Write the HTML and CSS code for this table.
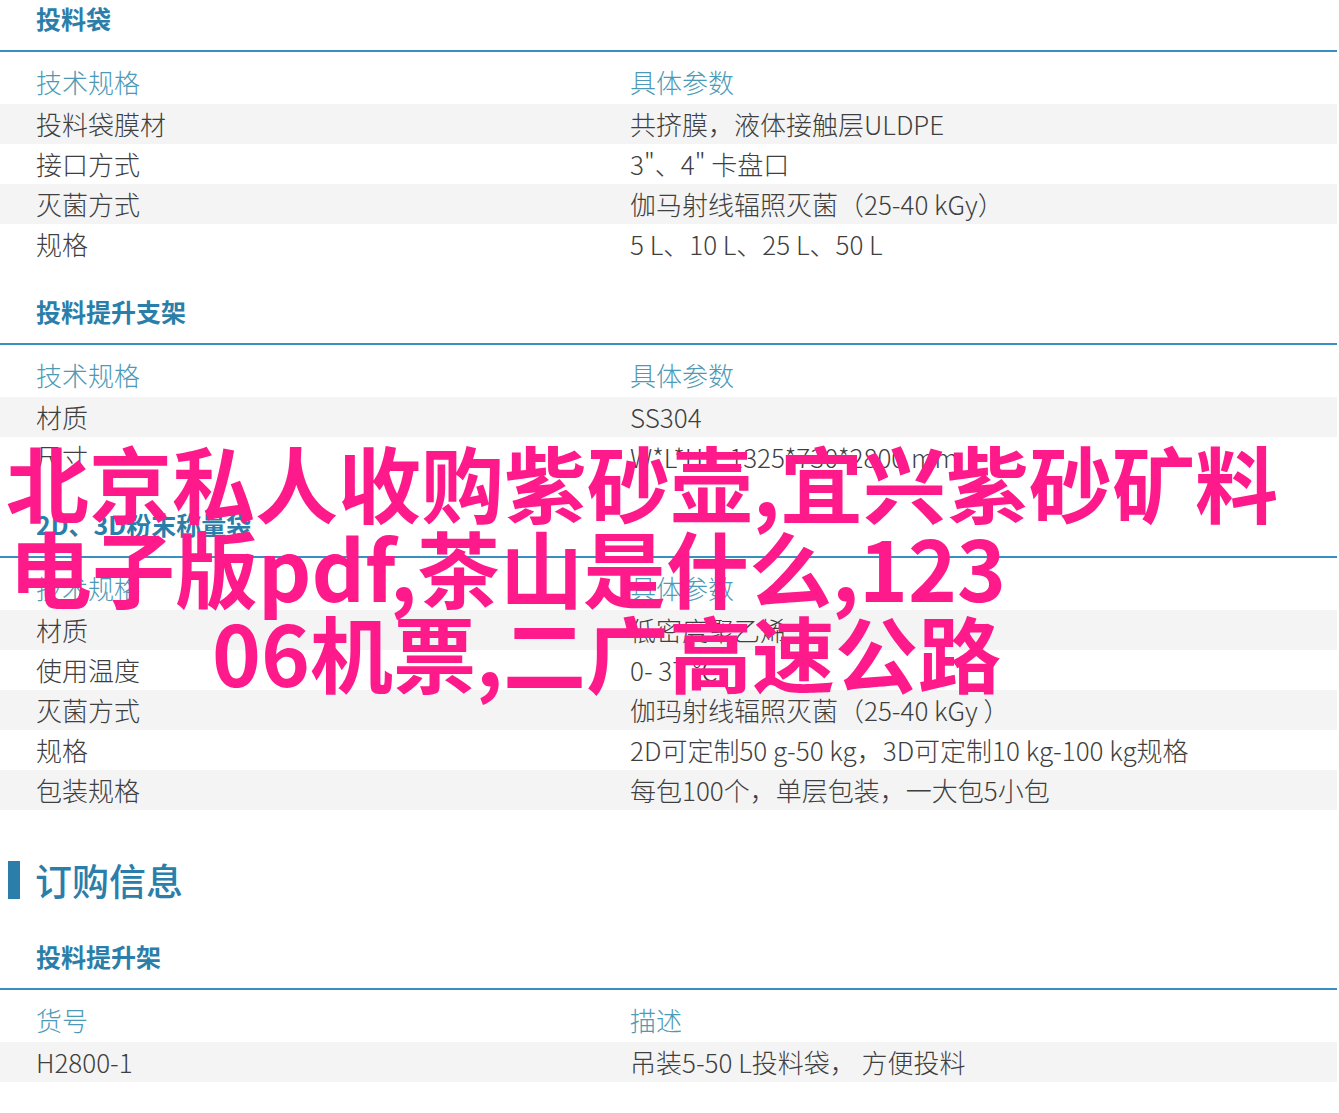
FILE: index.html
```html
<!DOCTYPE html>
<html lang="zh-CN">
<head>
<meta charset="utf-8">
<title>投料袋</title>
<link rel="stylesheet" href="styles.css">
</head>
<body>
<div class="page">
  <section class="spec">
    <h3 class="spec-title">投料袋</h3>
    <div class="row head"><div class="c1">技术规格</div><div class="c2">具体参数</div></div>
    <div class="row odd"><div class="c1">投料袋膜材</div><div class="c2">共挤膜，液体接触层ULDPE</div></div>
    <div class="row"><div class="c1">接口方式</div><div class="c2">3"、4" 卡盘口</div></div>
    <div class="row odd"><div class="c1">灭菌方式</div><div class="c2">伽马射线辐照灭菌（25-40 kGy）</div></div>
    <div class="row"><div class="c1">规格</div><div class="c2">5 L、10 L、25 L、50 L</div></div>
  </section>

  <section class="spec">
    <h3 class="spec-title">投料提升支架</h3>
    <div class="row head"><div class="c1">技术规格</div><div class="c2">具体参数</div></div>
    <div class="row odd"><div class="c1">材质</div><div class="c2">SS304</div></div>
    <div class="row"><div class="c1">尺寸</div><div class="c2">W*L*H：1325*730*2800 mm</div></div>
  </section>

  <section class="spec">
    <h3 class="spec-title">2D、3D粉末称量袋</h3>
    <div class="row head"><div class="c1">技术规格</div><div class="c2">具体参数</div></div>
    <div class="row odd"><div class="c1">材质</div><div class="c2">低密度聚乙烯</div></div>
    <div class="row"><div class="c1">使用温度</div><div class="c2">0- 37 ℃</div></div>
    <div class="row odd"><div class="c1">灭菌方式</div><div class="c2">伽玛射线辐照灭菌（25-40 kGy ）</div></div>
    <div class="row"><div class="c1">规格</div><div class="c2">2D可定制50 g-50 kg，3D可定制10 kg-100 kg规格</div></div>
    <div class="row odd"><div class="c1">包装规格</div><div class="c2">每包100个，单层包装，一大包5小包</div></div>
  </section>

  <h2 class="block-title"><span class="bar"></span>订购信息</h2>

  <section class="spec order">
    <h3 class="spec-title">投料提升架</h3>
    <div class="row head"><div class="c1">货号</div><div class="c2">描述</div></div>
    <div class="row odd"><div class="c1">H2800-1</div><div class="c2">吊装5-50 L投料袋， 方便投料</div></div>
  </section>

  <div class="overlay">
    <span class="ol-line">北京私人收购紫砂壶,宜兴紫砂矿料</span>
    <span class="ol-line l2">电子版pdf,茶山是什么,123</span>
    <span class="ol-line l3">06机票,二广高速公路</span>
  </div>
</div>
</body>
</html>
```

FILE: styles.css
```css
* { box-sizing: border-box; }
html, body { margin: 0; padding: 0; background: #fff; }
body {
  font-family: "Noto Sans CJK SC", "Noto Sans", sans-serif;
  color: #3f3f3f;
}
.page {
  position: relative;
  width: 1337px;
}
.spec { margin-bottom: 29px; }
.spec-title {
  margin: 0;
  padding: 0 0 14px 36px;
  height: 52px;
  line-height: 36px;
  font-size: 25px;
  font-weight: 700;
  color: #2b7ea9;
  border-bottom: 2px solid #3a8ec0;
}
.row {
  display: grid;
  grid-template-columns: 630px 1fr;
  height: 40px;
  line-height: 40px;
  font-size: 26px;
  font-weight: 300;
  white-space: nowrap;
}
.row .c1 { padding-left: 36px; }
.row.odd { background: #f4f4f4; }
.row.head {
  height: 52px;
  padding-top: 10px;
  color: #4d9ab6;
}
.block-title {
  display: flex;
  align-items: center;
  gap: 15px;
  margin: 50px 0 38px 0;
  height: 40px;
  line-height: 40px;
  font-size: 37px;
  font-weight: 500;
  color: #2b7ea9;
}
.block-title .bar {
  display: block;
  width: 12px;
  height: 38px;
  margin-left: 8px;
  background: #2b7ea9;
}
.order { margin-bottom: 0; }
.overlay {
  position: absolute;
  left: 6px;
  top: 439px;
  color: #ff1a8c;
  font-size: 83px;
  font-weight: 700;
  line-height: 85px;
  white-space: nowrap;
  pointer-events: none;
}
.ol-line { display: block; }
.ol-line.l2 { padding-left: 3px; }
.ol-line.l3 { padding-left: 206px; }
```
